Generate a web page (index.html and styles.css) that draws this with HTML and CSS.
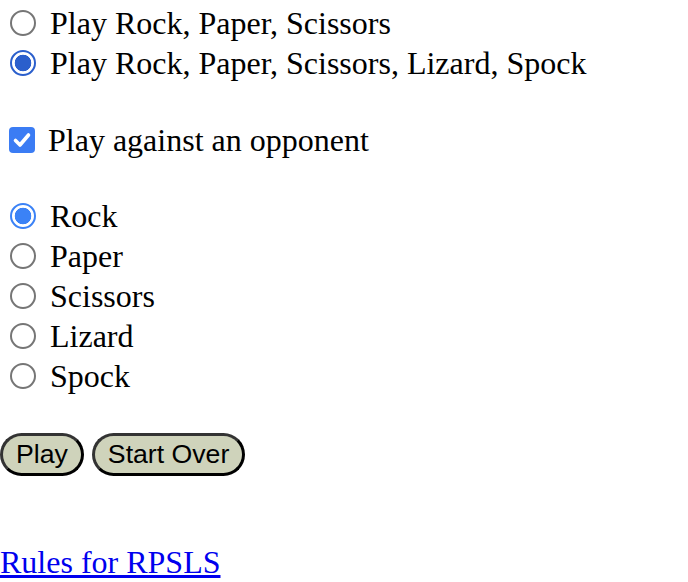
FILE: index.html
```html
<!DOCTYPE html>
<html>
<head>
<meta charset="utf-8">
<link rel="stylesheet" href="styles.css">
</head>
<body>
<form class="game">
  <div class="group group-first">
    <label class="row"><span class="radio"></span><span>Play Rock, Paper, Scissors</span></label>
    <label class="row"><span class="radio radio-on-dark"></span><span>Play Rock, Paper, Scissors, Lizard, Spock</span></label>
  </div>
  <div class="group">
    <label class="row row-check"><span class="checkbox"><svg viewBox="0 0 26 26" width="26" height="26"><path d="M6.5 13.5 L11 18 L19.5 8" fill="none" stroke="#fff" stroke-width="3.6" stroke-linecap="round" stroke-linejoin="round"/></svg></span><span>Play against an opponent</span></label>
  </div>
  <div class="group">
    <label class="row"><span class="radio radio-on"></span><span>Rock</span></label>
    <label class="row"><span class="radio"></span><span>Paper</span></label>
    <label class="row"><span class="radio"></span><span>Scissors</span></label>
    <label class="row"><span class="radio"></span><span>Lizard</span></label>
    <label class="row"><span class="radio"></span><span>Spock</span></label>
  </div>
  <div class="buttons">
    <button type="button" class="btn">Play</button>
    <button type="button" class="btn">Start Over</button>
  </div>
</form>
<a class="rules" href="#">Rules for RPSLS</a>
</body>
</html>
```
FILE: styles.css
```css
html, body {
  margin: 0;
  padding: 0;
  background: #fff;
}
body {
  font-family: "Liberation Serif", "Times New Roman", serif;
  font-size: 32px;
  color: #000;
  overflow: hidden;
}
.game {
  display: flex;
  flex-direction: column;
  padding-top: 3px;
}
.group {
  display: flex;
  flex-direction: column;
  margin-top: 36.5px;
}
.group-first {
  margin-top: 0;
}
.row {
  display: flex;
  align-items: center;
  height: 40px;
  line-height: 40px;
  white-space: nowrap;
}
.radio {
  box-sizing: border-box;
  width: 26px;
  height: 26px;
  border-radius: 50%;
  border: 2px solid #767676;
  background: #fff;
  margin-left: 10px;
  margin-right: 14px;
  flex: none;
}
.radio-on {
  border: 2.5px solid #3b82f6;
  background: radial-gradient(circle, #3b82f6 0 8px, #fff 8.6px);
}
.radio-on-dark {
  border: 2.5px solid #2b5fcc;
  background: radial-gradient(circle, #2b5fcc 0 8px, #fff 8.6px);
}
.checkbox {
  box-sizing: border-box;
  width: 26px;
  height: 26px;
  border-radius: 4px;
  background: #3b7cf4;
  margin-left: 9px;
  margin-right: 13px;
  flex: none;
  display: flex;
}
.buttons {
  display: flex;
  gap: 8px;
  margin-top: 36.5px;
}
.btn {
  font-family: "Liberation Sans", Arial, sans-serif;
  font-size: 26.67px;
  color: #000;
  background: #cfd3bb;
  border: 3px solid #000;
  border-top-color: #333;
  border-left-color: #333;
  border-radius: 22px;
  height: 43px;
  padding: 0 13px;
  line-height: 1;
}
.rules {
  display: block;
  margin-top: 66px;
  color: #0000ee;
  text-decoration: underline;
  line-height: 40px;
}
```
